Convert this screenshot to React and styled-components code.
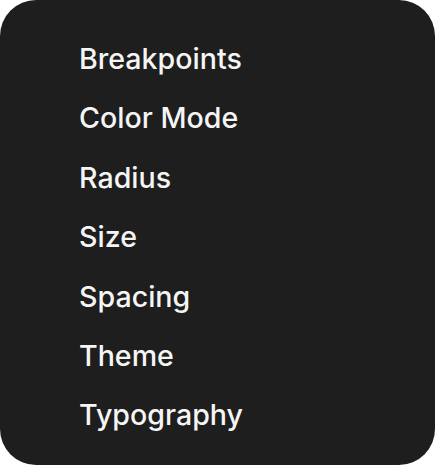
import React from 'react';
import styled, { createGlobalStyle } from 'styled-components';

const Global = createGlobalStyle`
    html, body {
        margin: 0;
        padding: 0;
        background: #ffffff;
    }
`;

const Panel = styled.div`
    width: 435px;
    height: 465px;
    box-sizing: border-box;
    background: #1e1e1e;
    border-radius: 36px;
    padding: 29px 0 0 79px;
    display: flex;
    flex-direction: column;
`;

const Item = styled.div`
    font-family: Inter, 'Noto Sans', sans-serif;
    font-size: 28.6px;
    font-weight: 500;
    line-height: 59.4px;
    color: #f5f5f5;
`;

const items = ['Breakpoints', 'Color Mode', 'Radius', 'Size', 'Spacing', 'Theme', 'Typography'];

const App = () => (
    <>
        <Global />
        <Panel>
            {items.map((label) => (
                <Item key={label}>{label}</Item>
            ))}
        </Panel>
    </>
);

export default App;
